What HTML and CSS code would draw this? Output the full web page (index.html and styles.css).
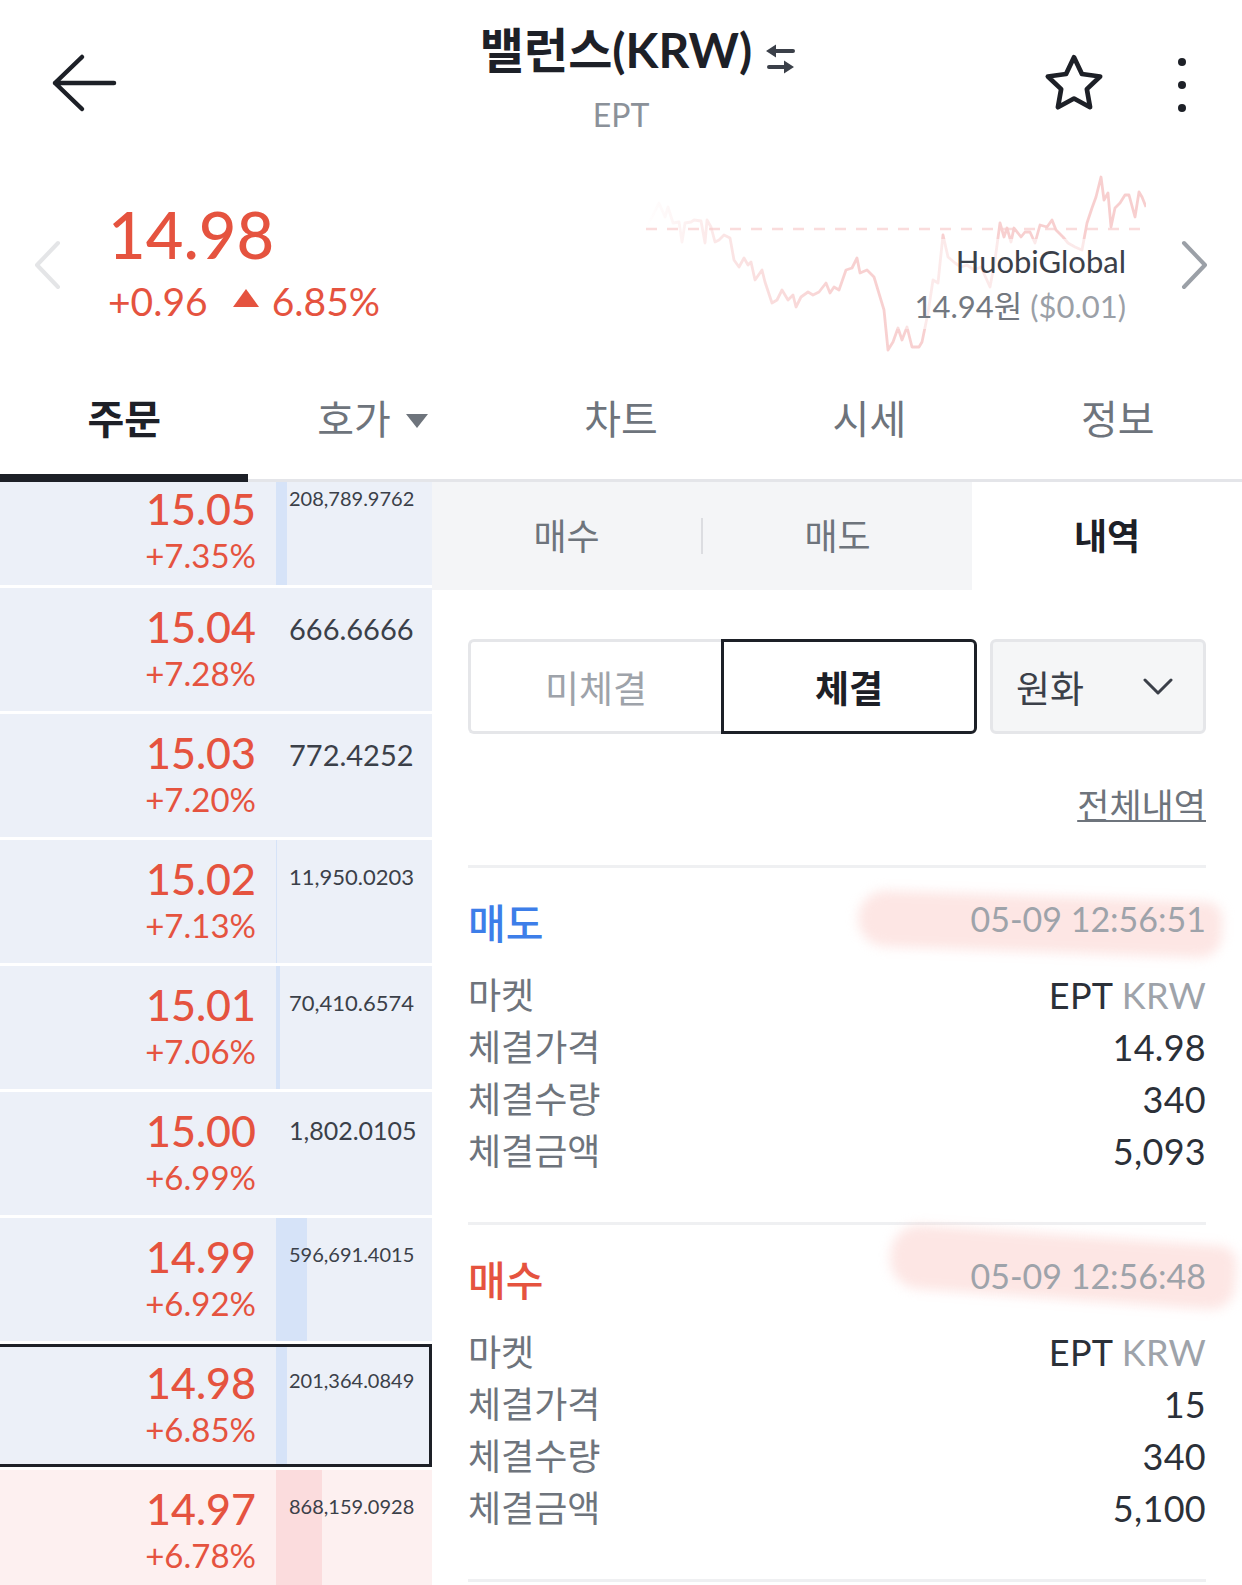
FILE: index.html
```html
<!DOCTYPE html>
<html lang="ko">
<head>
  <meta charset="UTF-8" />
  <meta name="viewport" content="width=device-width, initial-scale=1.0"/>
  <title>밸런스(KRW)</title>

  <link rel="stylesheet" href="styles.css">
</head>

<body>

  <header class="top-bar">
    <div class="top-left">
      <svg class="icon-back" viewBox="0 0 68 60">
        <path d="M64 30H5M32 4L5 30l27 26" fill="none" stroke="#1d2027" stroke-width="4.5" stroke-linecap="round" stroke-linejoin="round"/>
      </svg>
    </div>
    <div class="title-box">
      <div class="title-row">
        <h1 class="title">밸런스(KRW)</h1>
        <svg class="icon-swap" viewBox="0 0 32 34">
          <path d="M11 9h18M21 25H5" stroke="#3b4049" stroke-width="4" stroke-linecap="round"/>
          <path d="M2 9l10-6.5v13z M30 25l-10-6.5v13z" fill="#3b4049"/>
        </svg>
      </div>
      <div class="subtitle">EPT</div>
    </div>
    <div class="top-right">
      <svg class="icon-star" viewBox="2 1 56 54">
        <path d="M30 4l7.4 15.6 17 2.3-12.4 11.8 3 16.9L30 42.5l-15 8.1 3-16.9L5.6 21.9l17-2.3z" fill="none" stroke="#1d2027" stroke-width="4.4" stroke-linejoin="round"/>
      </svg>
      <svg class="icon-more" viewBox="0 0 12 56">
        <circle cx="6" cy="5" r="4"/>
        <circle cx="6" cy="28" r="4"/>
        <circle cx="6" cy="51" r="4"/>
      </svg>
    </div>
  </header>


  <section class="quote">
    <svg class="chev chev-left" viewBox="0 0 30 50">
      <path d="M26 3L5 25l21 22" fill="none" stroke="#e4e5e7" stroke-width="4" stroke-linecap="round" stroke-linejoin="round"/>
    </svg>

    <div class="price-box">
      <div class="price">14.98</div>
      <div class="change">
        <span>+0.96</span>
        <span class="tri-up"></span>
        <span>6.85%</span>
      </div>
    </div>

    <div class="spark">
      <svg class="spark-svg" viewBox="648 175 500 178">
        <defs>
          <linearGradient id="lineFade" x1="0" x2="1" y1="0" y2="0">
            <stop offset="0" stop-color="#f7cccc" stop-opacity="0"/>
            <stop offset="0.15" stop-color="#f7cccc" stop-opacity="0.5"/>
            <stop offset="0.4" stop-color="#f7cccc" stop-opacity="0.9"/>
            <stop offset="1" stop-color="#f7cccc" stop-opacity="0.95"/>
          </linearGradient>
        </defs>
        <line x1="648" y1="229" x2="1148" y2="229" stroke="#fadcdc" stroke-width="2.5" stroke-dasharray="11 10"/>
        <polyline fill="none" stroke="url(#lineFade)" stroke-width="2.8" stroke-linejoin="round"
          points="648,227 655,215 661,203 667,217 670,207 675,223 681,222 684,242 687,223 693,222 696,220 703,221 707,243 709,220 713,227 717,242 721,240 726,235 732,238 736,260 741,267 746,258 750,265 753,262 757,280 764,270 767,282 774,303 779,300 784,290 790,300 795,295 798,307 803,297 810,292 815,295 821,292 828,283 832,293 836,287 841,290 848,270 854,268 859,258 862,273 869,270 876,277 886,310 890,350 895,342 900,328 904,340 909,327 914,347 921,347 924,342 930,313 935,280 940,283 945,235 950,257 957,263 963,267 969,265 976,270 983,267 992,287 997,260 1002,223 1006,237 1009,228 1013,242 1016,228 1023,237 1027,232 1032,232 1037,243 1042,225 1049,227 1054,220 1058,230 1065,237 1070,243 1077,247 1084,250 1089,223 1094,208 1098,197 1103,177 1106,200 1110,193 1113,227 1117,208 1122,203 1127,195 1131,195 1137,217 1141,192 1144,197 1148,207"/>
      </svg>
      <div class="spark-label">
        <div class="exch">HuobiGlobal</div>
        <div class="exch-price">14.94원 <span class="usd">($0.01)</span></div>
      </div>
    </div>

    <svg class="chev chev-right" viewBox="0 0 30 50">
      <path d="M4 3l21 22L4 47" fill="none" stroke="#9ba0a7" stroke-width="4" stroke-linecap="round" stroke-linejoin="round"/>
    </svg>
  </section>


  <nav class="main-tabs">
    <div class="main-tab active">주문</div>
    <div class="main-tab">호가<span class="tri-down"></span></div>
    <div class="main-tab">차트</div>
    <div class="main-tab">시세</div>
    <div class="main-tab">정보</div>
  </nav>


  <div class="trade">

    <div class="book">
      <div class="book-row first">
        <div class="book-price"><div class="bp">15.05</div><div class="bpct">+7.35%</div></div>
        <div class="book-qty"><span class="qty-bar" style="width: 11px"></span><span class="qty qty-s">208,789.9762</span></div>
      </div>
      <div class="book-row">
        <div class="book-price"><div class="bp">15.04</div><div class="bpct">+7.28%</div></div>
        <div class="book-qty"><span class="qty qty-l">666.6666</span></div>
      </div>
      <div class="book-row">
        <div class="book-price"><div class="bp">15.03</div><div class="bpct">+7.20%</div></div>
        <div class="book-qty"><span class="qty qty-l">772.4252</span></div>
      </div>
      <div class="book-row">
        <div class="book-price"><div class="bp">15.02</div><div class="bpct">+7.13%</div></div>
        <div class="book-qty"><span class="qty-bar" style="width: 1px"></span><span class="qty qty-m">11,950.0203</span></div>
      </div>
      <div class="book-row">
        <div class="book-price"><div class="bp">15.01</div><div class="bpct">+7.06%</div></div>
        <div class="book-qty"><span class="qty-bar" style="width: 4px"></span><span class="qty qty-m">70,410.6574</span></div>
      </div>
      <div class="book-row">
        <div class="book-price"><div class="bp">15.00</div><div class="bpct">+6.99%</div></div>
        <div class="book-qty"><span class="qty qty-ml">1,802.0105</span></div>
      </div>
      <div class="book-row">
        <div class="book-price"><div class="bp">14.99</div><div class="bpct">+6.92%</div></div>
        <div class="book-qty"><span class="qty-bar" style="width: 31px"></span><span class="qty qty-s">596,691.4015</span></div>
      </div>
      <div class="book-row current">
        <div class="book-price"><div class="bp">14.98</div><div class="bpct">+6.85%</div></div>
        <div class="book-qty"><span class="qty-bar" style="width: 11px"></span><span class="qty qty-s">201,364.0849</span></div>
      </div>
      <div class="book-row bid">
        <div class="book-price"><div class="bp">14.97</div><div class="bpct">+6.78%</div></div>
        <div class="book-qty"><span class="qty-bar" style="width: 46px"></span><span class="qty qty-s">868,159.0928</span></div>
      </div>
    </div>


    <div class="panel">
      <div class="sub-tabs">
        <div class="sub-tab-group">
          <div class="sub-tab">매수</div>
          <span class="sub-sep"></span>
          <div class="sub-tab">매도</div>
        </div>
        <div class="sub-tab active">내역</div>
      </div>

      <div class="panel-body">
        <div class="filter-row">
          <div class="seg">
            <button class="seg-btn">미체결</button>
            <button class="seg-btn on">체결</button>
          </div>
          <button class="currency">
            <span>원화</span>
            <svg class="icon-down" viewBox="0 0 30 18">
              <path d="M2 2l13 13L28 2" fill="none" stroke="#3b4049" stroke-width="3" stroke-linecap="round" stroke-linejoin="round"/>
            </svg>
          </button>
        </div>

        <div class="all-row"><a class="all-link">전체내역</a></div>

        <div class="fill">
          <span class="mark mark-1"></span>
          <div class="fill-head">
            <span class="fill-type sell">매도</span>
            <span class="fill-time">05-09 12:56:51</span>
          </div>
          <div class="fill-rows">
            <div class="fill-row"><span class="fill-label">마켓</span><span class="fill-value">EPT <span class="unit">KRW</span></span></div>
            <div class="fill-row"><span class="fill-label">체결가격</span><span class="fill-value">14.98</span></div>
            <div class="fill-row"><span class="fill-label">체결수량</span><span class="fill-value">340</span></div>
            <div class="fill-row"><span class="fill-label">체결금액</span><span class="fill-value">5,093</span></div>
          </div>
        </div>

        <div class="fill">
          <span class="mark mark-2"></span>
          <div class="fill-head">
            <span class="fill-type buy">매수</span>
            <span class="fill-time">05-09 12:56:48</span>
          </div>
          <div class="fill-rows">
            <div class="fill-row"><span class="fill-label">마켓</span><span class="fill-value">EPT <span class="unit">KRW</span></span></div>
            <div class="fill-row"><span class="fill-label">체결가격</span><span class="fill-value">15</span></div>
            <div class="fill-row"><span class="fill-label">체결수량</span><span class="fill-value">340</span></div>
            <div class="fill-row"><span class="fill-label">체결금액</span><span class="fill-value">5,100</span></div>
          </div>
        </div>
      </div>
    </div>

  </div>

</body>
</html>
```

FILE: styles.css
```css
* {
  box-sizing: border-box;
}

html, body {
  margin: 0;
  padding: 0;
  background: #fff;
}

body {
  width: 1242px;
  height: 1585px;
  overflow: hidden;
  font-family: Lato, "Noto Sans CJK KR", sans-serif;
  color: #1d2027;
}

/* top bar */
.top-bar {
  display: grid;
  grid-template-columns: 1fr auto 1fr;
  height: 160px;
}

.top-left {
  padding: 53px 0 0 50px;
}

.icon-back {
  display: block;
  width: 68px;
  height: 60px;
}

.title-box {
  text-align: center;
  padding-top: 22px;
}

.title-row {
  position: relative;
  display: inline-block;
  margin-left: -10px;
}

.title {
  margin: 0;
  font-size: 48px;
  font-weight: 700;
  line-height: 56px;
}

.icon-swap {
  position: absolute;
  left: calc(100% + 12px);
  top: 20px;
  width: 32px;
  height: 34px;
}

.subtitle {
  margin-top: 17px;
  font-size: 32px;
  line-height: 40px;
  color: #8b9199;
}

.top-right {
  display: flex;
  justify-content: flex-end;
  align-items: flex-start;
  gap: 72px;
  padding: 54px 54px 0 0;
}

.icon-star {
  width: 60px;
  height: 58px;
}

.icon-more {
  width: 12px;
  height: 56px;
  margin-top: 3px;
  fill: #1d2027;
}

/* quote */
.quote {
  display: flex;
  align-items: flex-start;
  height: 210px;
}

.chev {
  width: 30px;
  height: 50px;
  margin-top: 80px;
  flex: none;
}

.chev-left {
  margin-left: 32px;
}

.chev-right {
  margin: 80px 32px 0 34px;
}

.price-box {
  margin: 42px 0 0 46px;
  color: #e5533f;
}

.price {
  font-size: 65px;
  font-weight: 500;
  line-height: 65px;
}

.change {
  display: flex;
  align-items: baseline;
  margin-top: 15px;
  font-size: 39px;
  line-height: 39px;
}

.tri-up {
  width: 0;
  height: 0;
  margin: 7px 13px 0 25px;
  border-left: 13px solid transparent;
  border-right: 13px solid transparent;
  border-bottom: 18px solid #e5533f;
  align-self: flex-start;
}

.spark {
  position: relative;
  width: 500px;
  height: 178px;
  margin: 15px 0 0 auto;
}

.spark-svg {
  display: block;
  width: 500px;
  height: 178px;
}

.spark-label {
  position: absolute;
  right: 20px;
  top: 64px;
  padding-left: 30px;
  text-align: right;
  font-size: 31px;
  line-height: 45px;
  background: linear-gradient(to right, rgba(255,255,255,0), rgba(255,255,255,0.55) 30px);
}

.exch {
  color: #3b4049;
}

.exch-price {
  color: #737880;
}

.exch-price .usd {
  color: #9ba0a7;
}

/* main tabs */
.main-tabs {
  display: grid;
  grid-template-columns: repeat(5, 1fr);
  height: 112px;
  border-bottom: 3px solid #e4e5e9;
}

.main-tab {
  height: 112px;
  margin-bottom: -3px;
  padding-top: 25px;
  text-align: center;
  font-size: 40px;
  line-height: 48px;
  color: #6e747c;
}

.main-tab.active {
  border-bottom: 8px solid #1d2027;
  color: #1d2027;
  font-weight: 700;
}

.tri-down {
  display: inline-block;
  width: 0;
  height: 0;
  margin-left: 15px;
  vertical-align: 6px;
  border-left: 11px solid transparent;
  border-right: 11px solid transparent;
  border-top: 14px solid #6e747c;
}

/* trade area */
.trade {
  display: grid;
  grid-template-columns: 432px 1fr;
  height: 1103px;
}

.book {
  display: flex;
  flex-direction: column;
  gap: 3px;
  overflow: hidden;
}

.book-row {
  position: relative;
  display: grid;
  grid-template-columns: 276px 1fr;
  height: 123px;
  flex: none;
  background: #ecf0f8;
}

/* first row is scrolled partly under the tab bar */
.book-row.first {
  height: 103px;
}

.book-row.first .book-price {
  padding-top: 5px;
}

.book-row.first .book-qty {
  padding-top: 6px;
}

.book-row.bid {
  background: #fdf0f0;
}

.book-row.current::after {
  content: '';
  position: absolute;
  top: 0; left: 0; right: 0; bottom: 0;
  border: 3px solid #1d2027;
  border-left: none;
}

.book-price {
  padding: 17px 20px 0 0;
  text-align: right;
  color: #e5533f;
}

.bp {
  font-size: 43px;
  font-weight: 500;
  line-height: 43px;
}

.bpct {
  margin-top: 9px;
  font-size: 33px;
  line-height: 33px;
}

.book-qty {
  position: relative;
  padding: 26px 0 0 13px;
  color: #3b4049;
}

.qty-bar {
  position: absolute;
  top: 0;
  left: 0;
  bottom: 0;
  background: #d6e3f8;
}

.bid .qty-bar {
  background: #fbdcdd;
}

.qty {
  position: relative;
  display: block;
  line-height: 1;
  white-space: nowrap;
}

.qty-l { font-size: 29px; }
.qty-ml { font-size: 25px; }
.qty-m { font-size: 22px; }
.qty-s { font-size: 20px; }

/* right panel */
.panel {
  display: flex;
  flex-direction: column;
}

.sub-tabs {
  display: flex;
  height: 108px;
}

.sub-tab-group {
  display: flex;
  align-items: center;
  width: 540px;
  background: #f4f5f7;
}

.sub-tab {
  flex: 1;
  text-align: center;
  font-size: 36px;
  line-height: 108px;
  color: #6e747c;
}

.sub-tab.active {
  color: #1d2027;
  font-weight: 700;
}

.sub-sep {
  width: 2px;
  height: 36px;
  background: #dcdde1;
}

.panel-body {
  padding: 49px 36px 0;
}

.filter-row {
  display: flex;
  height: 95px;
}

.seg {
  display: flex;
  width: 509px;
}

.seg-btn,
.currency {
  margin: 0;
  font-family: inherit;
  font-size: 37px;
  background: #fff;
  cursor: pointer;
}

.seg-btn {
  flex: 1;
  border: 3px solid #e5e6e9;
  border-right: none;
  border-radius: 6px 0 0 6px;
  color: #9ea3aa;
}

.seg-btn.on {
  border: 3px solid #1d2027;
  border-radius: 0 6px 6px 0;
  color: #1d2027;
  font-weight: 700;
}

.currency {
  display: flex;
  align-items: center;
  justify-content: space-between;
  width: 216px;
  margin-left: 13px;
  padding: 0 30px 0 23px;
  border: 3px solid #e5e6e9;
  border-radius: 6px;
  background: #f5f6f7;
  color: #3b4049;
}

.icon-down {
  width: 30px;
  height: 18px;
}

.all-row {
  margin-top: 50px;
  text-align: right;
  font-size: 35px;
  line-height: 42px;
}

.all-link {
  color: #6e747c;
  text-decoration: underline;
  text-decoration-thickness: 2px;
}

.all-row + .fill {
  margin-top: 39px;
}

.fill {
  position: relative;
  z-index: 0;
  padding: 33px 0 45px;
  border-top: 3px solid #eff0f2;
}

.fill:last-child {
  border-bottom: 3px solid #eff0f2;
}

.mark {
  position: absolute;
  z-index: -1;
  background: rgba(251, 200, 196, 0.45);
  filter: blur(6px);
  border-radius: 30px 18px 24px 30px;
}

.mark-1 {
  top: 28px;
  right: -16px;
  width: 364px;
  height: 56px;
  transform: rotate(2deg);
}

.mark-2 {
  top: 10px;
  right: -30px;
  width: 346px;
  height: 64px;
  transform: rotate(4deg);
}

.fill-head {
  display: flex;
  justify-content: space-between;
  align-items: flex-start;
}

.fill-type {
  font-size: 41px;
  font-weight: 500;
  line-height: 46px;
}

.fill-type.sell {
  color: #3d7ee9;
}

.fill-type.buy {
  color: #e5533f;
}

.fill-time {
  margin-top: 1px;
  font-size: 34px;
  line-height: 34px;
  color: #9ea3aa;
}

.fill-rows {
  margin-top: 22px;
}

.fill-row {
  display: flex;
  justify-content: space-between;
  align-items: baseline;
  height: 52px;
  line-height: 52px;
}

.fill-label {
  font-size: 36px;
  color: #6e747c;
}

.fill-value {
  font-size: 36px;
  letter-spacing: 0.3px;
  color: #2b3038;
}

.fill-value .unit {
  color: #9ea3aa;
}
```
